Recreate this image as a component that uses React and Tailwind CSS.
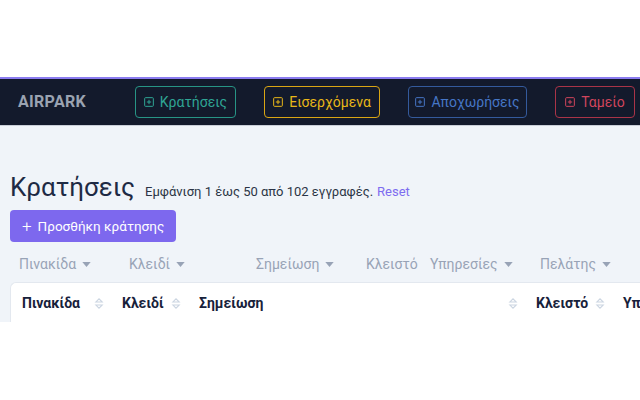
import React from 'react'

const PlusBox = ({ className }) => (
  <svg viewBox="0 0 12 12" className={className} fill="none" stroke="currentColor" strokeWidth="1.2">
    <rect x="0.8" y="0.8" width="10.4" height="10.4" rx="1" />
    <path d="M6 3.4v5.2M3.4 6h5.2" />
  </svg>
)

const Caret = () => (
  <svg viewBox="0 0 10 6" className="ml-[6px] h-[5px] w-[9px] fill-current">
    <path d="M0 0h10L5 6z" />
  </svg>
)

const Sort = () => (
  <svg viewBox="0 0 10 16" className="h-[15px] w-[10px]" fill="none" stroke="#cbd5e1" strokeWidth="1.1">
    <path d="M1.5 6.5 5 3l3.5 3.5z" />
    <path d="M1.5 9.5 5 13l3.5-3.5z" />
  </svg>
)

const navItems = [
  { label: 'Κρατήσεις', cls: 'w-[101px] border-[#279485] text-[#2fa594]' },
  { label: 'Εισερχόμενα', cls: 'w-[116px] border-[#d9a514] text-[#e9b718]' },
  { label: 'Αποχωρήσεις', cls: 'w-[119px] border-[#345a9c] text-[#4676c6]' },
  { label: 'Ταμείο', cls: 'w-[80px] border-[#a93448] text-[#d0455c]' },
]

const filters = [
  { label: 'Πινακίδα', w: 'w-[110px]', caret: true },
  { label: 'Κλειδί', w: 'w-[127px]', caret: true },
  { label: 'Σημείωση', w: 'w-[110px]', caret: true },
  { label: 'Κλειστό', w: 'w-[64px]', caret: false },
  { label: 'Υπηρεσίες', w: 'w-[110px]', caret: true },
  { label: 'Πελάτης', w: 'w-[100px]', caret: true },
]

const columns = [
  { label: 'Πινακίδα', w: 'w-[100px]' },
  { label: 'Κλειδί', w: 'w-[77px]' },
  { label: 'Σημείωση', w: 'w-[337px]' },
  { label: 'Κλειστό', w: 'w-[87px]' },
  { label: 'Υπηρεσίες', w: 'w-[100px]', nosort: true },
]

export default function App() {
  return (
    <div className="h-[400px] w-[640px] overflow-hidden bg-white font-['Roboto','Noto_Sans',sans-serif]">
      <div className="h-[77px]" />
      <nav className="flex h-[48px] items-center border-t-2 border-[#8b7cf0] bg-[#131a2c] pl-[18px]">
        <span className="w-[117px] text-[16px] font-bold tracking-[0.3px] text-[#9aa3b1]">AIRPARK</span>
        <div className="flex gap-[28px]">
          {navItems.map((n) => (
            <div
              key={n.label}
              className={`flex h-[32px] shrink-0 items-center justify-center gap-[6px] rounded-[4px] border text-[14px] ${n.cls}`}
            >
              <PlusBox className="h-[10px] w-[10px]" />
              {n.label}
            </div>
          ))}
        </div>
      </nav>
      <main className="h-[197px] overflow-hidden border-t border-[#c9ced8] bg-[#f0f4f9] pt-[44px]">
        <div className="flex items-baseline px-[10px]">
          <h1 className="text-[26px] leading-[34px] text-[#1e2a44]">Κρατήσεις</h1>
          <span className="ml-[10px] text-[13px] text-[#2b3445]">Εμφάνιση 1 έως 50 από 102 εγγραφές.</span>
          <span className="ml-[4px] text-[13px] text-[#7d6cf0]">Reset</span>
        </div>
        <button className="ml-[10px] mt-[6px] flex h-[32px] items-center gap-[6px] rounded-[4px] bg-[#7d68ee] px-[12px] text-[13.5px] text-white">
          <span className="text-[17px] font-light leading-none">+</span>
          Προσθήκη κράτησης
        </button>
        <div className="mt-[10px] flex h-[24px] items-center pl-[19px] text-[14px] text-[#98a3b6]">
          {filters.map((f) => (
            <div key={f.label} className={`flex shrink-0 items-center ${f.w}`}>
              {f.label}
              {f.caret && <Caret />}
            </div>
          ))}
        </div>
        <div className="ml-[10px] mt-[6px] flex h-[40px] items-center rounded-tl-[6px] border-t border-l border-[#e3e8ef] bg-white pl-[11px] pt-[2px] text-[14px] font-bold text-[#17213a]">
          {columns.map((c) => (
            <div key={c.label} className={`flex shrink-0 items-center justify-between pr-[18px] ${c.w}`}>
              {c.label}
              {!c.nosort && <Sort />}
            </div>
          ))}
        </div>
      </main>
    </div>
  )
}
